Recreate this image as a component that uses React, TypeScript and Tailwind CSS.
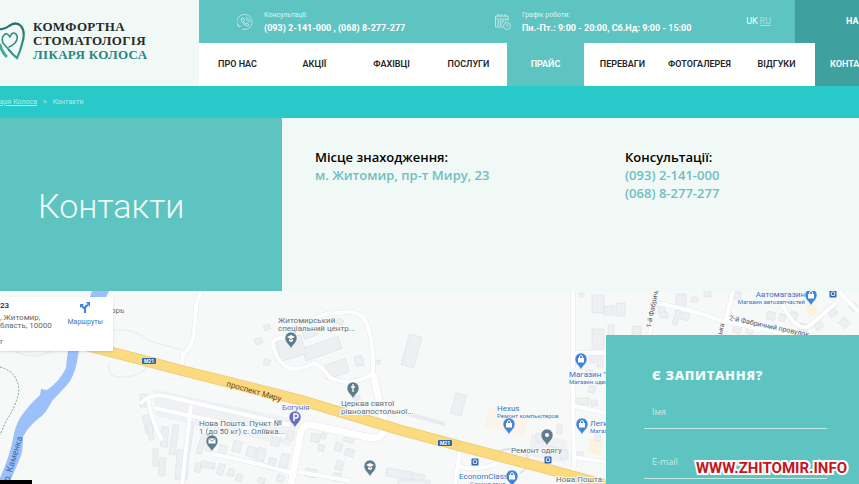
/**
 * Contacts page of the dental clinic
 *
 *   header (logo, phones, nav) | breadcrumbs | title + contacts | map + form
 */
const NAV = [
  { label: 'ПРО НАС' },
  { label: 'АКЦІЇ' },
  { label: 'ФАХІВЦІ' },
  { label: 'ПОСЛУГИ' },
  { label: 'ПРАЙС', tone: 'bg-[#5ec4c1] text-white' },
  { label: 'ПЕРЕВАГИ' },
  { label: 'ФОТОГАЛЕРЕЯ' },
  { label: 'ВІДГУКИ' },
  { label: 'КОНТАКТИ', tone: 'bg-[#3fa09f] text-white' },
];

// ── Map data ─────────────────────────────────────────────────────────────
// x, y, width, height, rotation
type Box = [number, number, number, number, number];

const BUILDINGS: Box[] = [
  [303, 342, 38, 13, -19], [278, 338, 26, 20, -17], [303, 328, 14, 9, -20],
  [324, 362, 24, 14, -20], [355, 356, 8, 10, -15], [337, 319, 6, 6, 30],
  [264, 325, 6, 5, -20], [255, 338, 7, 6, -20], [264, 359, 6, 6, 20],
  [375, 360, 5, 4, 0], [354, 396, 6, 4, -15],
  [405, 335, 13, 32, 15], [453, 394, 11, 21, 15],
  [140, 394, 7, 13, 0], [144, 415, 8, 18, -10], [148, 424, 5, 16, -10],
  [153, 449, 5, 17, 0], [161, 427, 7, 20, 5], [159, 458, 6, 18, 5],
  [171, 425, 6, 30, 8], [176, 450, 6, 30, 4], [186, 422, 6, 30, 8],
  [183, 452, 5, 28, 4], [195, 463, 6, 9, 15], [201, 462, 14, 6, 12],
  [199, 434, 5, 20, 18], [207, 437, 6, 14, 16],
  [219, 445, 7, 11, 15], [233, 441, 8, 11, 15], [247, 447, 9, 10, 15],
  [257, 448, 8, 13, 15], [268, 458, 7, 12, 15], [280, 454, 8, 17, 15],
  [218, 464, 6, 11, 20], [228, 469, 6, 7, 20], [236, 474, 6, 7, 20],
  [258, 478, 7, 5, 20], [277, 475, 7, 7, 20],
  [272, 436, 8, 10, 15], [287, 431, 7, 9, 15],
  [311, 434, 9, 8, 10], [321, 433, 5, 6, 15], [318, 445, 6, 6, 15],
  [335, 443, 7, 8, 15], [344, 435, 10, 7, 15], [345, 449, 9, 7, 15],
  [305, 469, 12, 8, 10], [336, 461, 7, 9, 20], [333, 473, 8, 8, 10],
  [386, 470, 26, 8, 10], [412, 474, 12, 10, 12], [398, 480, 32, 8, 0],
  [592, 295, 12, 18, 0], [604, 306, 10, 9, 0], [616, 303, 9, 13, 0],
  [592, 329, 12, 20, 0], [608, 325, 6, 10, 0], [579, 293, 5, 4, 0],
  [590, 353, 5, 10, 0], [597, 355, 6, 12, 0], [586, 370, 7, 7, 0],
  [589, 386, 6, 7, 10], [577, 398, 12, 7, 0], [591, 400, 6, 6, 0],
  [557, 424, 5, 10, 0], [536, 433, 7, 9, 0], [549, 447, 8, 7, 10],
  [560, 450, 8, 9, 0], [577, 452, 6, 7, 0], [595, 432, 6, 9, 0],
  [658, 303, 7, 10, 0], [676, 294, 10, 13, 0], [660, 312, 8, 6, 0],
  [674, 310, 5, 15, 15], [681, 313, 8, 7, 15], [632, 326, 9, 8, 0],
  [691, 297, 7, 5, 0], [704, 291, 7, 6, 0],
  [734, 292, 7, 7, 0], [733, 324, 8, 9, 15], [746, 328, 7, 6, 15],
  [767, 312, 8, 8, 10], [779, 314, 6, 7, 10], [790, 312, 7, 9, 15],
  [799, 324, 9, 7, 15], [815, 323, 8, 6, -35], [829, 310, 8, 6, -35],
  [840, 319, 9, 8, 45], [850, 303, 7, 7, 45],
];

const STREETS = [
  'M201 291 L196 306 L194 334 Q193 346 183 354 L182 368',
  'M573 291 L573 405 L574 466 L570 484',
  'M573 353 L606 353 M574 406 L606 413 M572 457 L606 462',
  'M656 291 L650 334 M657 303 Q690 309 722 321 L859 348',
  'M733 291 L722 334 M727 318 L760 331',
  'M781 302 Q795 331 808 327 L836 303',
  'M838 291 L859 312',
  'M460 451 L455 484 M456 466 Q480 472 497 463',
  'M140 404 Q150 393 165 396 L290 425 M154 408 L285 436',
  'M212 454 Q240 459 296 474 M300 472 L350 481',
  'M148 398 Q151 420 162 440 M191 405 L182 484',
  'M284 338 Q269 337 274 349 Q279 365 290 368 Q300 371 313 363 Q322 365 329 377 Q347 386 365 378 L373 374 Q374 340 366 322 Q361 312 349 312 L325 314 L310 320',
];

const AVENUE = 'M373 374 L385 425 Q384 439 371 438 L312 425 Q302 423 300 436 L291 484';
const HIGHWAY = 'M80 344 L150 362 L180 370 L300 400 L400 430 L460 446 L540 467 L620 489';

const COLORS = {
  grey: '#607d8b',
  blue: '#4285d6',
  violet: '#6b70bd',
};

type PinProps = {
  x: number;
  y: number;
  tone: keyof typeof COLORS;
  kind: 'school' | 'church' | 'mail' | 'parking' | 'bag' | 'dot';
};

function Pin({ x, y, tone, kind }: PinProps) {
  return (
    <g transform={`translate(${x} ${y})`}>
      <path
        d="M0 9 C-1 5 -6 3 -6 -2 A6 6 0 0 1 6 -2 C6 3 1 5 0 9Z"
        fill={COLORS[tone]}
        stroke="#fff"
        strokeWidth=".5"
      />
      {kind === 'school' && <path d="M-4 -3 L0 -5 L4 -3 L0 -1Z M-2 -1 L0 0 L2 -1 V1 L0 2 L-2 1Z" fill="#fff" />}
      {kind === 'church' && <path d="M0 -6 V2 M-2 -3 H2" stroke="#fff" strokeWidth="1.3" />}
      {kind === 'mail' && (
        <>
          <rect x="-3.5" y="-4.5" width="7" height="5" rx=".5" fill="#fff" />
          <path d="M-3 -4 L0 -1.7 L3 -4" fill="none" stroke="#607d8b" strokeWidth=".8" />
        </>
      )}
      {kind === 'parking' && <path d="M-1 2 V-5 H1 A2 2 0 0 1 1 -1 H-1" fill="none" stroke="#fff" strokeWidth="1.5" />}
      {kind === 'bag' && (
        <>
          <path d="M-3 -3 H3 V1.500 H-3Z" fill="#fff" />
          <path d="M-1.500 -3 V-4 A1.500 1.500 0 0 1 1.500 -4 V-3" fill="none" stroke="#fff" strokeWidth=".9" />
        </>
      )}
      {kind === 'dot' && <circle cy="-2" r="2" fill="#fff" />}
    </g>
  );
}

function BusStop({ x, y }: { x: number; y: number }) {
  return (
    <g transform={`translate(${x} ${y})`}>
      <rect x="-3.5" y="-3.5" width="7" height="7" rx="1" fill="#2f68b5" />
      <rect x="-1.7" y="-2" width="3.4" height="3.5" rx=".5" fill="none" stroke="#fff" strokeWidth=".9" />
    </g>
  );
}

function RoadSign({ x, y }: { x: number; y: number }) {
  return (
    <g transform={`translate(${x} ${y})`}>
      <rect x="-7" y="-3" width="14" height="6" rx="1" fill="#3567a8" />
      <text y="2" textAnchor="middle" fontSize="5" fontWeight="700" fill="#fff">M21</text>
    </g>
  );
}

function CityMap() {
  return (
    <svg
      className="absolute inset-0 h-full w-full font-[Roboto,sans-serif]"
      viewBox="0 291 859 193"
      preserveAspectRatio="xMinYMin slice"
      role="img"
      aria-label="Карта"
    >
      <rect y="291" width="859" height="193" fill="#f7f9f9" />

      {/* quarters and shopping areas */}
      <path d="M153 389 L298 420 L290 446 L203 427 L156 416Z" fill="#eff1f4" />
      <path d="M490 407 L528 420 L524 436 L484 427Z" fill="#fcf4ea" />
      <path d="M590 438 L603 442 L600 456 L588 452Z M806 304 L815 305 L818 313 L808 318Z" fill="#fdf3dc" />
      <path d="M531 434 L568 440 L565 463 L529 456Z" fill="#eff1f4" />

      {/* river and footpath */}
      <path
        d="M92 291 H109 Q98 315 86 333 Q79 345 77 362 Q74 377 67 385 L52 401 Q45 415 39 418 Q27 428 23 437 Q23 453 20 458 L9 484 H0 V478 Q10 456 14 434 Q16 422 25 411 Q32 402 40 395 L41 389 L47 390 Q60 381 66 368 Q67 350 73 333 Q85 312 92 291Z"
        fill="#9cc0f9"
      />
      <path d="M0 367 Q17 371 19 390 Q17 405 6 421 L0 435" fill="none" stroke="#73a880" strokeDasharray="2 1.5" />
      <path d="M15 351 Q35 361 51 351 M113 331 Q130 326 150 341 L182 350 M110 362 Q105 379 125 377 Q143 375 147 366" fill="none" stroke="#eceeef" strokeWidth="1.5" />

      {/* buildings */}
      <g fill="#edeff2" stroke="#e0e3e7" strokeWidth=".7">
        {BUILDINGS.map(([x, y, w, h, angle], i) => (
          <rect key={i} x={x} y={y} width={w} height={h} transform={`rotate(${angle} ${x + w / 2} ${y + h / 2})`} />
        ))}
      </g>

      {/* streets: grey casing under a white line */}
      <g fill="none" strokeLinejoin="round">
        {STREETS.map((d) => <path key={d} d={d} stroke="#e5e8ea" strokeWidth="5" />)}
        <path d={AVENUE} stroke="#e5e8ea" strokeWidth="8" />
        {STREETS.map((d) => <path key={d} d={d} stroke="#fff" strokeWidth="4" />)}
        <path d={AVENUE} stroke="#fff" strokeWidth="7" />
        <path d="M498 452 Q514 444 527 455 Q531 467 520 473" stroke="#dfe2e5" strokeWidth="2" />
        <path d="M404 413 L445 424" stroke="#e9ebee" strokeWidth="4" />
      </g>

      {/* highway */}
      <path d={HIGHWAY} fill="none" stroke="#edcf82" strokeWidth="11" />
      <path d={HIGHWAY} fill="none" stroke="#fcda80" strokeWidth="9" />
      <RoadSign x={149} y={361} />
      <RoadSign x={445} y={443} />

      {/* labels */}
      <g fontSize="8" fill="#5d7280" stroke="#f7f9f9" strokeWidth="2" paintOrder="stroke">
        <text x="278" y="323">Житомирський</text>
        <text x="278" y="331">спеціальний центр...</text>
        <text x="341" y="406">Церква святої</text>
        <text x="341" y="414">рівноапостольної...</text>
        <text x="199" y="426">Нова Пошта. Пункт №</text>
        <text x="199" y="434">1 (до 50 кг) с. Оліївка...</text>
        <text x="511" y="453">Ремонт одягу</text>
        <text x="556" y="482">Нова Пошта. П</text>
        <text x="282" y="410" fill="#6b70bd">Богунія</text>
        <text x="111" y="313">орь</text>
      </g>
      <g fontSize="8" fill="#3c73c4" stroke="#f7f9f9" strokeWidth="2" paintOrder="stroke">
        <text x="497" y="411">Hexus</text>
        <text x="497" y="418" fontSize="6">Ремонт компьютеров</text>
        <text x="569" y="377">Магазин "О</text>
        <text x="569" y="384" fontSize="6">Магазин одеж</text>
        <text x="590" y="426">Легк</text>
        <text x="590" y="433" fontSize="6">Магаз</text>
        <text x="459" y="479">EconomClass</text>
        <text x="470" y="486" fontSize="6">Секонд-хенд</text>
        <text x="805" y="297" textAnchor="end">Автомагазин</text>
        <text x="805" y="304" textAnchor="end" fontSize="6">Магазин автозапчастей</text>
      </g>
      <text transform="translate(226 386) rotate(16)" fontSize="8" fill="#6b4a1e" stroke="#fcda80" strokeWidth="1" paintOrder="stroke">проспект Миру</text>
      <g fontSize="7" fill="#555b61">
        <text transform="translate(651 328) rotate(-79)">1-й Фабричн</text>
        <text transform="translate(722 335) rotate(-77)">ька</text>
        <text transform="translate(729 320) rotate(12)">2-й Фабричний провулок</text>
      </g>
      <text transform="translate(9 482) rotate(-73)" fontSize="9" fill="#3d69ad">р. Каменка</text>

      <Pin x={291} y={340} tone="grey" kind="school" />
      <Pin x={353} y={390} tone="grey" kind="church" />
      <Pin x={212} y={443} tone="grey" kind="mail" />
      <Pin x={370} y={468} tone="grey" kind="school" />
      <Pin x={547} y={437} tone="grey" kind="dot" />
      <Pin x={295} y={419} tone="violet" kind="parking" />
      <Pin x={509} y={426} tone="blue" kind="bag" />
      <Pin x={581} y={361} tone="blue" kind="bag" />
      <Pin x={582} y={426} tone="blue" kind="bag" />
      <Pin x={512} y={478} tone="blue" kind="bag" />
      <Pin x={811} y={297} tone="blue" kind="bag" />
      <BusStop x={475} y={462} />
      <BusStop x={548} y={460} />
      <BusStop x={833} y={294} />
    </svg>
  );
}

function HeartTooth() {
  return (
    <svg viewBox="0 0 25 40" className="h-10 w-[25px] shrink-0" fill="none" strokeLinecap="round" aria-hidden="true">
      <defs>
        <linearGradient id="tooth" x1="0" y1="0" x2="0" y2="1">
          <stop offset="0" stopColor="#2d6f70" />
          <stop offset="1" stopColor="#3f9c90" />
        </linearGradient>
      </defs>
      <path d="M0 8 Q4 9 9 5 Q16 0 21 5 Q26 11 22 23 Q20 31 17 37 Q13 34 9 29" stroke="url(#tooth)" strokeWidth="2.2" />
      <path d="M9 29 L3 22 Q1 17 4 14 Q7 11 10 16 Q12 10 16 13 Q19 17 15 22 Q12 25 9 26" stroke="#388b88" strokeWidth="1.6" strokeLinejoin="round" />
      <path d="M0 24 Q2 31 6 35" stroke="#49a79b" strokeWidth="3" />
    </svg>
  );
}

function PhoneIcon() {
  return (
    <svg viewBox="0 0 16 16" className="size-4 shrink-0" fill="none" stroke="#c5ebe8" aria-hidden="true">
      <path d="M2 13 A7.5 7.5 0 1 1 5 15 M1 10 L2 13 L4 12" strokeWidth=".8" />
      <path d="M5 4 L4 6 Q5 10 10 12 L12 11 L10.500 9 L9 10 Q7 9 6.500 7 L7.500 6 L6 4Z" strokeWidth=".9" />
      <path d="M8.500 4.500 Q11 5 11.500 8 M9 3 Q12.500 4 13 8" strokeWidth=".7" />
    </svg>
  );
}

function CalendarIcon() {
  return (
    <svg viewBox="0 0 16 16" className="size-4 shrink-0" fill="none" stroke="#c5ebe8" strokeWidth=".9" aria-hidden="true">
      <path d="M8 13 H.500 V2 H13 V7 M.500 5 H13 M3 0 V3 M6 0 V3 M10 0 V3" />
      <path d="M2.500 7 H11 M2.500 9 H8 M2.500 11 H7" strokeDasharray="1.500 1" strokeWidth="1.300" />
      <circle cx="12" cy="12" r="3.500" />
      <path d="M12 10 V12 H13.500" />
    </svg>
  );
}

function Header() {
  return (
    <header className="flex h-[86px] overflow-hidden">
      <a href="#" className="flex w-[199px] shrink-0 items-center gap-2 bg-[#f0f9f6] pb-1">
        <HeartTooth />
        <span className="font-['Liberation_Serif',serif] text-[13px] leading-[14px] font-bold tracking-wide whitespace-nowrap text-[#252b2b]">
          КОМФОРТНА
          <br />
          СТОМАТОЛОГІЯ
          <br />
          <span className="text-[#2b8583]">ЛІКАРЯ КОЛОСА</span>
        </span>
      </a>

      <div className="flex min-w-0 flex-1 flex-col">
        <div className="flex h-[43px] shrink-0 bg-[#5ec4c1] text-white">
          <div className="flex w-[258px] shrink-0 items-center gap-[11px] pl-[38px]">
            <PhoneIcon />
            <p className="text-[9px] leading-[13px] font-bold whitespace-nowrap">
              <span className="block text-[7px] font-normal text-[#dff4f2]">Консультації:</span>
              (093) 2-141-000 , (068) 8-277-277
            </p>
          </div>
          <div className="flex flex-1 items-center gap-[11px] pl-[38px]">
            <CalendarIcon />
            <p className="text-[9px] leading-[13px] font-bold whitespace-nowrap">
              <span className="block text-[7px] font-normal text-[#dff4f2]">Графік роботи:</span>
              Пн.-Пт.: 9:00 - 20:00, Сб.Нд: 9:00 - 15:00
            </p>
          </div>
          <div className="flex items-center gap-[2px] pr-6 text-[9px]">
            <a href="#uk">UK</a>
            <a href="#ru" className="text-[#a9dfdd] underline">RU</a>
          </div>
          <button type="button" className="w-16 overflow-hidden bg-[#3fa09f] pl-[51px] text-left text-[9px] font-bold">
            НА
          </button>
        </div>

        <nav className="flex flex-1 bg-white text-[9px] font-semibold text-[#262626]">
          {NAV.map(({ label, tone }) => (
            <a
              key={label}
              href="#"
              className={`flex w-[77px] shrink-0 items-center justify-center ${tone ?? ''}`}
            >
              {label}
            </a>
          ))}
        </nav>
      </div>
    </header>
  );
}

function PlaceCard() {
  return (
    <div className="absolute top-[6px] left-0 flex h-[54px] w-[113px] justify-between bg-white pt-[5px] pr-[10px] text-[8px] leading-[8px] text-[#666] shadow">
      <div className="whitespace-nowrap">
        <p className="mb-1 font-medium text-[#222]">23</p>
        <p>, Житомир,</p>
        <p>бласть, 10000</p>
        <a href="#" className="mt-2 block text-[#3c73c4]">г</a>
      </div>
      <a href="#" className="flex flex-col items-center gap-1 text-[7px] text-[#3c73c4]">
        <svg viewBox="0 0 12 12" className="size-3" fill="none" stroke="#4285d6" strokeWidth="2" aria-hidden="true">
          <path d="M6 11 V7 L2 3 M6 7 Q6 4 9 3" />
          <path d="M7 0 H11 V5Z" fill="#4285d6" stroke="none" />
          <path d="M1 6 V2 H5Z" fill="#4285d6" stroke="none" />
        </svg>
        Маршруты
      </a>
    </div>
  );
}

function QuestionForm() {
  const fields = [
    { id: 'name', label: 'Імя', type: 'text' },
    { id: 'email', label: 'E-mail', type: 'email' },
  ];

  return (
    <form className="absolute top-11 right-0 bottom-0 flex w-[253px] flex-col overflow-hidden bg-[#5ec4c1] pt-7 pr-8 pl-[38px] font-['Open_Sans',sans-serif]">
      <h2 className="mb-2 pl-2 text-[13px] leading-6 font-extrabold tracking-wider text-[#effaf8]">Є ЗАПИТАННЯ?</h2>
      <div className="flex flex-col gap-4">
        {fields.map(({ id, label, type }) => (
          <input
            key={id}
            id={id}
            type={type}
            aria-label={label}
            placeholder={label}
            className="h-[34px] w-full shrink-0 border-b border-[#c5ebe8] bg-transparent px-2 text-[9px] text-white outline-none placeholder:text-[#c5ebe8]"
          />
        ))}
      </div>
    </form>
  );
}

export default function App() {
  return (
    <div className="relative flex min-h-screen flex-col overflow-hidden bg-[#f0f9f6] font-[Roboto,sans-serif]">
      <Header />

      {/* ── Breadcrumbs ── */}
      <div className="flex h-8 items-center gap-[6px] bg-[#2ac9c9] text-[7px] text-[#b5eeec]">
        <a href="#" className="flex w-[37px] justify-end overflow-hidden whitespace-nowrap underline">аря Колоса</a>
        <span>&gt;</span>
        <span>Контакти</span>
      </div>

      {/* ── Title and contacts ── */}
      <section className="flex h-[173px]">
        <div className="flex w-[282px] shrink-0 items-center bg-[#5ec4c1] pt-1 pl-[38px]">
          <h1 className="text-[34px] font-light text-[#effaf8]">Контакти</h1>
        </div>
        <div className="flex flex-1 pt-[30px] pl-[33px] font-['Open_Sans',sans-serif] text-[13px] leading-[18px] font-semibold text-[#6fbfc0]">
          <div className="w-[310px]">
            <h2 className="text-black">Місце знаходження:</h2>
            <p>м. Житомир, пр-т Миру, 23</p>
          </div>
          <div>
            <h2 className="text-black">Консультації:</h2>
            <p>(093) 2-141-000</p>
            <p>(068) 8-277-277</p>
          </div>
        </div>
      </section>

      {/* ── Map ── */}
      <section className="relative min-h-[193px] flex-1 overflow-hidden">
        <CityMap />
        <PlaceCard />
        <QuestionForm />
        <div className="absolute bottom-0 left-0 h-1 w-8 bg-black" />
        <p className="absolute right-3 bottom-1 font-[Roboto,sans-serif] text-[15px] leading-6 font-bold text-[#c4161c] [-webkit-text-stroke:4px_white] [paint-order:stroke_fill]">
          WWW.ZHITOMIR.INFO
        </p>
      </section>
    </div>
  );
}
